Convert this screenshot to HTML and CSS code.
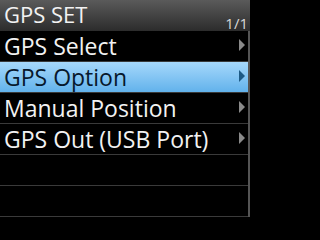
FILE: index.html
```html
<!DOCTYPE html>
<html>
<head>
<meta charset="utf-8">
<link rel="stylesheet" href="styles.css">
</head>
<body>
<div class="screen">
  <div class="header">
    <span class="title">GPS SET</span>
    <span class="page">1/1</span>
  </div>
  <div class="list">
    <div class="row"><span class="label">GPS Select</span><span class="arrow"></span></div>
    <div class="row active"><span class="label">GPS Option</span><span class="arrow"></span></div>
    <div class="row"><span class="label">Manual Position</span><span class="arrow"></span></div>
    <div class="row"><span class="label">GPS Out (USB Port)</span><span class="arrow"></span></div>
    <div class="row"></div>
    <div class="row"></div>
  </div>
</div>
</body>
</html>
```
FILE: styles.css
```css
html, body {
  margin: 0;
  padding: 0;
  background: #000;
}
.screen {
  width: 250px;
  height: 219px;
  background: #000;
  font-family: "Open Sans", "Noto Sans", sans-serif;
  color: #f2f2f2;
  overflow: hidden;
}
.header {
  height: 31px;
  box-sizing: border-box;
  display: flex;
  justify-content: space-between;
  align-items: flex-start;
  padding: 0 2px 0 4px;
  background: linear-gradient(#5a5a5a, #2c2c2c);
}
.title {
  font-size: 22px;
  line-height: 28px;
}
.page {
  font-size: 15px;
  line-height: 15px;
  margin-top: 16px;
  color: #d8d8d8;
}
.list {
  display: flex;
  flex-direction: column;
  border-right: 2px solid #555;
}
.row {
  height: 31px;
  box-sizing: border-box;
  border-bottom: 1px solid #3a3a3a;
  display: flex;
  align-items: center;
  justify-content: space-between;
  padding: 0 3px 0 4px;
}
.label {
  font-size: 23px;
  line-height: 30px;
}
.arrow {
  width: 0;
  height: 0;
  margin-top: -2px;
  border-top: 6px solid transparent;
  border-bottom: 6px solid transparent;
  border-left: 6px solid #8a8a8a;
}
.row.active {
  background: linear-gradient(#a6d8fb, #62b2ec);
  color: #07182c;
}
.row.active .arrow {
  border-left-color: #1d5a85;
}
```
